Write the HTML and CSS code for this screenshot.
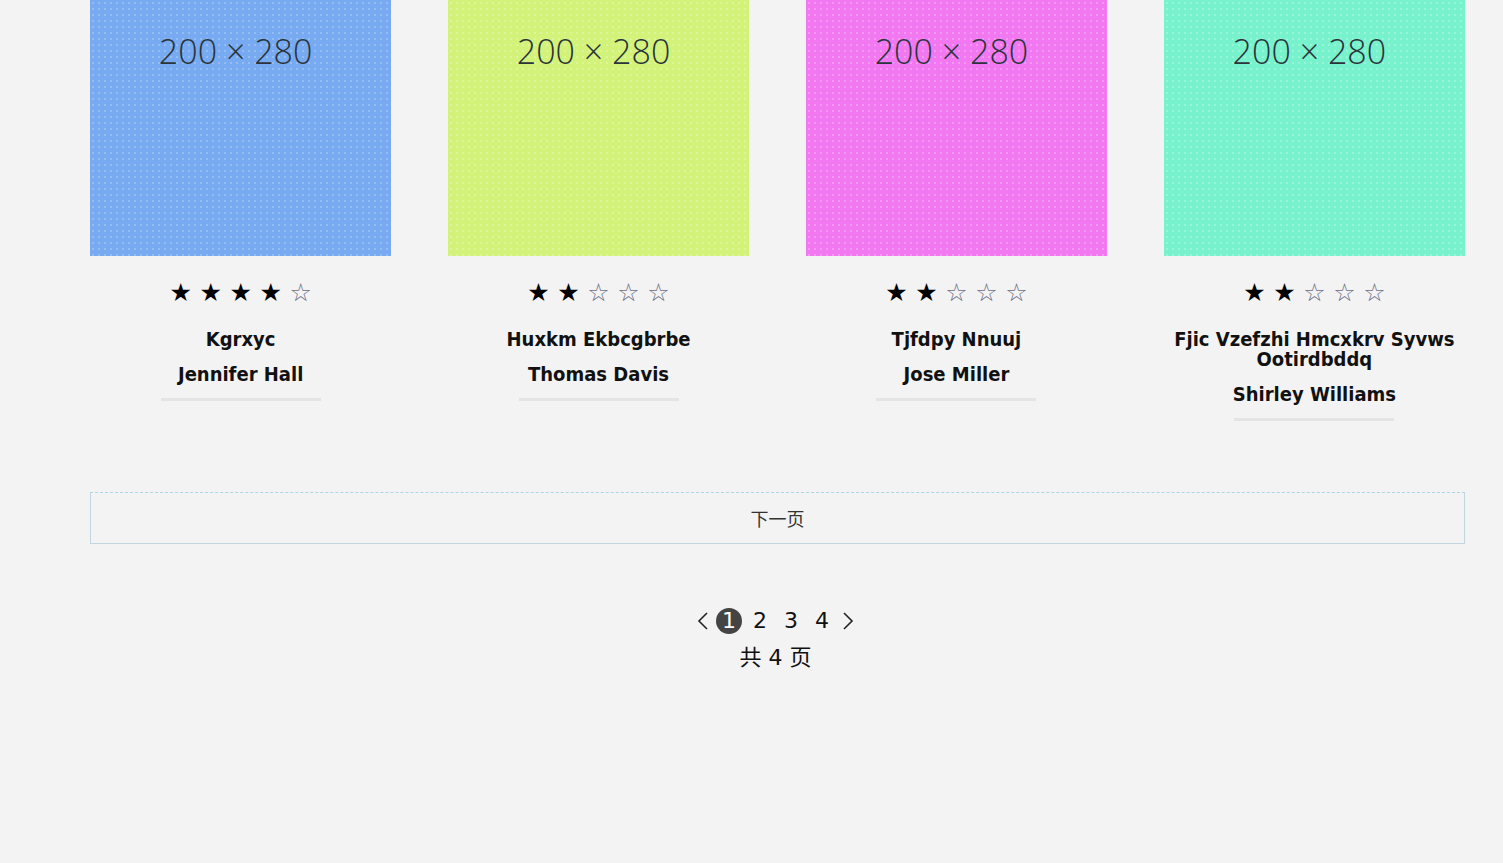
FILE: index.html
```html
<!DOCTYPE html>
<html lang="zh">
<head>
<meta charset="utf-8">
<title>列表</title>
<link rel="stylesheet" href="styles.css">
</head>
<body>
<div class="page">
  <div class="grid">
    <div class="card">
      <div class="thumb blue"><span class="ph">200 × 280</span></div>
      <div class="stars"><span class="on">★</span><span class="on">★</span><span class="on">★</span><span class="on">★</span><span class="off">☆</span></div>
      <div class="title">Kgrxyc</div>
      <div class="author">Jennifer Hall</div>
      <div class="rule"></div>
    </div>
    <div class="card">
      <div class="thumb lime"><span class="ph">200 × 280</span></div>
      <div class="stars"><span class="on">★</span><span class="on">★</span><span class="off">☆</span><span class="off">☆</span><span class="off">☆</span></div>
      <div class="title">Huxkm Ekbcgbrbe</div>
      <div class="author">Thomas Davis</div>
      <div class="rule"></div>
    </div>
    <div class="card">
      <div class="thumb pink"><span class="ph">200 × 280</span></div>
      <div class="stars"><span class="on">★</span><span class="on">★</span><span class="off">☆</span><span class="off">☆</span><span class="off">☆</span></div>
      <div class="title">Tjfdpy Nnuuj</div>
      <div class="author">Jose Miller</div>
      <div class="rule"></div>
    </div>
    <div class="card">
      <div class="thumb mint"><span class="ph">200 × 280</span></div>
      <div class="stars"><span class="on">★</span><span class="on">★</span><span class="off">☆</span><span class="off">☆</span><span class="off">☆</span></div>
      <div class="title">Fjic Vzefzhi Hmcxkrv Syvws Ootirdbddq</div>
      <div class="author">Shirley Williams</div>
      <div class="rule"></div>
    </div>
  </div>
  <button class="more" type="button">下一页</button>
  <div class="pager">
    <div class="pages">
      <span class="arrow">
        <svg width="14" height="22" viewBox="0 0 14 22"><path d="M11 3 L3 11 L11 19" fill="none" stroke="#222" stroke-width="1.6"/></svg>
      </span>
      <span class="num cur">1</span>
      <span class="num">2</span>
      <span class="num">3</span>
      <span class="num">4</span>
      <span class="arrow">
        <svg width="14" height="22" viewBox="0 0 14 22"><path d="M3 3 L11 11 L3 19" fill="none" stroke="#222" stroke-width="1.6"/></svg>
      </span>
    </div>
    <div class="total">共 4 页</div>
  </div>
</div>
</body>
</html>
```
FILE: styles.css
```css
html, body {
  margin: 0;
  padding: 0;
  background: #f3f3f3;
}
body {
  font-family: "DejaVu Sans Condensed", "DejaVu Sans", "Noto Sans CJK SC", sans-serif;
  color: #111;
}
.page {
  width: 1375px;
  margin-left: 90px;
}
.grid {
  display: grid;
  grid-template-columns: repeat(4, 1fr);
  column-gap: 56.67px;
  align-items: start;
}
.card {
  display: flex;
  flex-direction: column;
  align-items: center;
  text-align: center;
}
.thumb {
  width: 100%;
  height: 256px;
  display: flex;
  justify-content: center;
  background-image: radial-gradient(rgba(255,255,255,0.3) 0.6px, transparent 1px);
  background-size: 6px 6px;
}
.blue { background-color: #77aaf0; }
.lime { background-color: #d3f27a; }
.pink { background-color: #f178f1; }
.mint { background-color: #77f2cc; }
.ph {
  font-family: "Open Sans", sans-serif;
  font-weight: 300;
  font-size: 34px;
  color: #2a343a;
  line-height: 1;
  margin-top: 34px;
  margin-left: -10px;
  height: 34px;
}
.stars {
  display: flex;
  margin-top: 26px;
  height: 22px;
  align-items: center;
}
.stars span {
  width: 30px;
  font-family: "DejaVu Sans", sans-serif;
  font-size: 25px;
  line-height: 22px;
  text-align: center;
}
.stars .on { color: #000; }
.stars .off { color: #6e6e86; }
.title {
  margin-top: 25px;
  font-weight: bold;
  font-size: 20px;
  line-height: 20px;
  padding: 0 10px;
}
.author {
  margin-top: 15px;
  font-weight: bold;
  font-size: 20px;
  line-height: 20px;
}
.rule {
  width: 160px;
  height: 3px;
  background: #e4e4e4;
  margin-top: 14px;
}
.more {
  display: block;
  width: 1375px;
  height: 52px;
  margin-top: 71px;
  background: transparent;
  border: 1px solid #c2d6e2;
  border-top: 1px dashed #a9d6e8;
  font-family: "Noto Sans CJK SC", sans-serif;
  font-size: 18px;
  color: #333;
  padding: 0;
  cursor: pointer;
}
.pager {
  margin-top: 60px;
  display: flex;
  flex-direction: column;
  align-items: center;
  padding-right: 4px;
}
.pages {
  display: flex;
  align-items: center;
  gap: 5px;
  font-family: "DejaVu Sans", sans-serif;
  font-size: 22px;
  height: 34px;
}
.arrow {
  display: flex;
  align-items: center;
  width: 16px;
  justify-content: center;
}
.num {
  width: 26px;
  height: 26px;
  line-height: 26px;
  text-align: center;
  color: #111;
}
.num.cur {
  background: #444;
  color: #fff;
  border-radius: 50%;
}
.total {
  margin-top: 7px;
  font-family: "DejaVu Sans", "Noto Sans CJK SC", sans-serif;
  font-size: 22px;
  color: #111;
  line-height: 26px;
}
```
